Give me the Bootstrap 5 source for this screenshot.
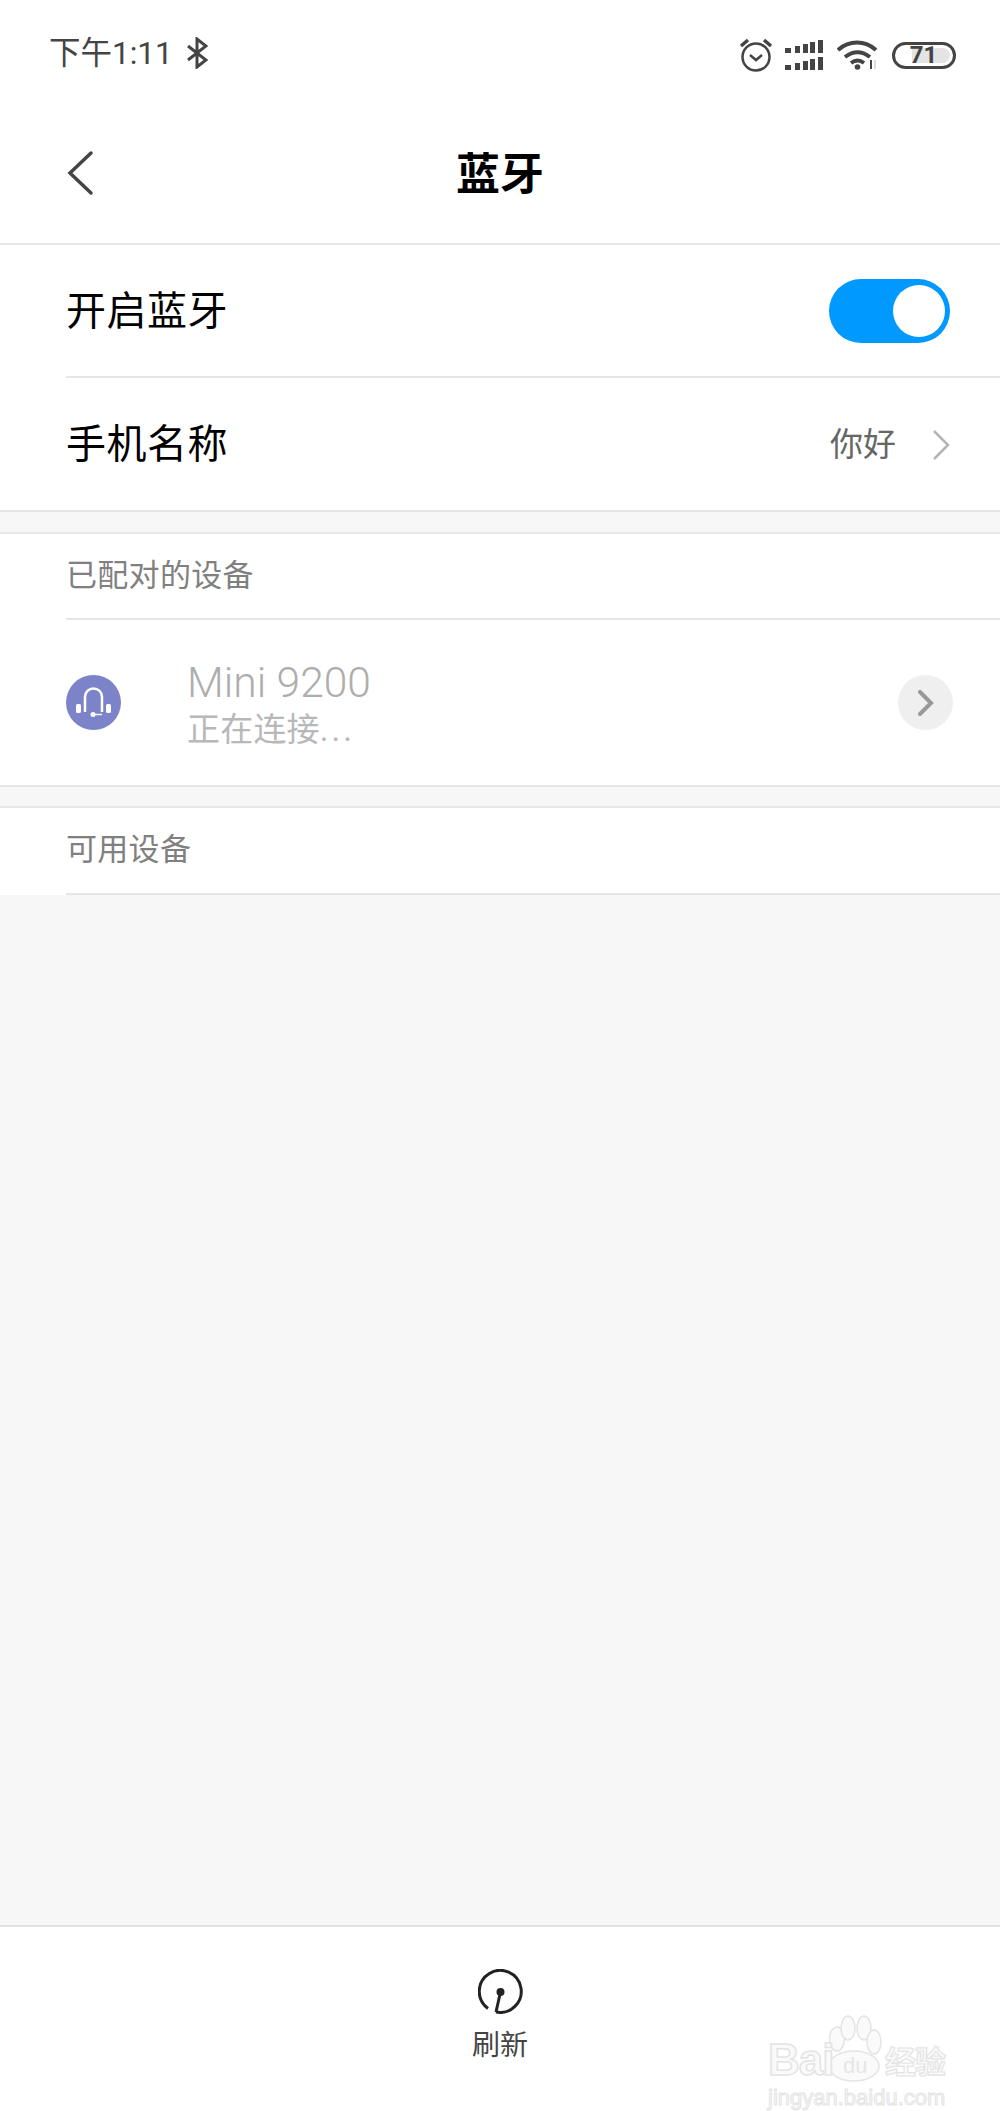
<!DOCTYPE html>
<html lang="zh">
<head>
<meta charset="utf-8">
<title>蓝牙</title>
<link rel="stylesheet" href="https://cdn.jsdelivr.net/npm/bootstrap@5.3.0/dist/css/bootstrap.min.css">
<style>
html,body{height:100%}
body{font-family:Roboto,"Noto Sans CJK SC",sans-serif;background:#f7f7f7;color:#000}
.phone{height:2111px;position:relative;overflow:hidden}
.stat-bar{height:80px;padding:34px 44px 0 49px;color:#444}
.stat-time{font-size:31.500px;line-height:40px}
.bt-ic{margin-left:-3px;margin-top:-2px}
.stat-icons{padding-top:4px}
.ic-alarm{margin-right:12px}
.ic-signal{margin-right:14px}
.ic-wifi{margin-right:13px}
.batt-num{font:700 24px/27px Roboto,sans-serif;color:#444}
.batt{width:64px;height:27px;border:3px solid #444;border-radius:14px;position:relative;display:flex;align-items:center;justify-content:center}
.batt-fill{position:absolute;left:17px;top:3px;bottom:3px;width:38px;background:#e4e4e4;border-radius:0 9px 9px 0}
.batt-num{position:relative;margin-left:-1px}
.top-head{height:165px;position:relative;border-bottom:2px solid #e6e6e6;background:#fff;padding-top:26px}
.head-title{font-size:44px;font-weight:700;line-height:60px}
.back-ic{position:absolute;left:66px;top:70px}
.ind-line{margin-left:66px;border-bottom:2px solid #e6e6e6}
.set-row{height:133px;padding-right:50px;padding-top:2px;font-size:40px;letter-spacing:.5px}
.set-row2{height:132px;margin-left:66px}
.group-a{border-bottom:2px solid #e6e6e6;background:#fff}
.sw{width:121px;height:64px;border-radius:32px;background:#0099ff;position:relative;margin-top:-2px}
.sw-knob{position:absolute;right:5px;top:6px;width:52px;height:52px;border-radius:50%;background:#fff}
.val{font-size:33px;color:#666;margin-right:36px;letter-spacing:0}
.gap-band{height:20px;background:#f7f7f7}
.gap-short{height:19px}
.sec-group{background:#fff;border-top:2px solid #e8e8e8}
.sec-head{height:86px;font-size:31px;letter-spacing:.3px;color:#808080}
.sec-last{height:87px}
.dev-row{height:165px;padding-right:47px;margin-left:66px}
.dev-ic{width:55px;height:55px;margin-right:69px;flex:none}
.dev-txt{padding-top:5px;margin-left:-3px}
.dev-name{font-size:42.500px;line-height:50px;color:#adadad;font-weight:300}
.dev-sub{font-size:33px;line-height:44px;color:#b8b8b8;margin-top:0;letter-spacing:.2px}
.dots{letter-spacing:3px}
.go-btn{width:55px;height:55px;border-radius:50%;background:#efefef;margin-left:auto}
.dev-wrap{border-bottom:2px solid #e6e6e6}
.foot-bar{height:186px;background:#fff;border-top:2px solid #e2e2e2;padding-top:42px;margin-top:auto}
.foot-lbl{font-size:28px;line-height:38px;color:#444;margin-top:13px}
.wm{position:absolute;left:768px;top:2012px;width:180px;height:97px;pointer-events:none}
.wm-brand{position:absolute;left:0;top:26px;font:700 44px/44px "Liberation Sans",sans-serif;color:#fafafa;-webkit-text-stroke:1.5px #e4e4e4;letter-spacing:-1px}
.wm-du{position:absolute;left:75px;top:41px;font:400 22px/26px "Liberation Sans",sans-serif;color:#e6e6e6}
.wm-cn{position:absolute;left:117px;top:28px;font:700 31px/40px "Noto Sans CJK SC",sans-serif;color:#fafafa;-webkit-text-stroke:1.2px #e4e4e4;letter-spacing:-1px;white-space:nowrap}
.wm-url{position:absolute;left:0;top:74px;font:400 22px/24px "Liberation Sans",sans-serif;color:#fafafa;-webkit-text-stroke:1px #e4e4e4;white-space:nowrap}
.wm-paw{position:absolute;left:56px;top:2px}
</style>
</head>
<body>
<div class="phone d-flex flex-column">
  <div class="stat-bar bg-white d-flex justify-content-between align-items-start">
    <div class="d-flex align-items-center gap-3">
      <span class="stat-time">下午1:11</span>
      <svg class="bt-ic" width="22" height="32" viewBox="0 0 22 32" fill="none" stroke="#444" stroke-width="3"><path d="M2 9l18 14-9 7V2l9 7L2 23"/></svg>
    </div>
    <div class="stat-icons d-flex align-items-center">
      <svg class="ic-alarm" width="34" height="34" viewBox="0 0 34 34" fill="none" stroke="#444"><circle cx="17" cy="19" r="13.500" stroke-width="2.500"/><path d="M11 17l6 5 6-5" stroke-width="2.500"/><path d="M2 8l7-6M32 8l-7-6" stroke-width="3.500"/></svg>
      <svg class="ic-signal" width="38" height="30" viewBox="0 0 38 30" fill="#444"><path d="M0 8h6v5H0zM10 6h5v7h-5zM18 4h5v9h-5zM25 2h5v11h-5zM33 0h5v13h-5zM0 25h6v5H0zM10 23h5v7h-5zM18 21h5v9h-5zM25 19h5v11h-5zM33 17h5v13h-5z"/></svg>
      <svg class="ic-wifi" width="42" height="30" viewBox="0 0 42 30" fill="none" stroke="#444" stroke-width="4"><path d="M1 10c11-10 27-10 38 0M8 17c8-6 17-6 25 0M14 23c4-3 9-3 13 0"/><circle cx="20.500" cy="27" r="2.800" fill="#444" stroke="none"/><path d="M34 20v9" stroke-width="2"/><path d="M38 20v9" stroke="#ddd" stroke-width="2"/></svg>
      <div class="batt"><span class="batt-fill"></span><span class="batt-num">71</span></div>
    </div>
  </div>

  <div class="top-head d-flex align-items-center justify-content-center">
    <svg class="back-ic" width="28" height="46" viewBox="0 0 28 46" fill="none" stroke="#444" stroke-width="3.500" stroke-linecap="round"><path d="M25 3L4 23l21 20"/></svg>
    <div class="head-title">蓝牙</div>
  </div>

  <div class="group-a">
    <div class="ind-line set-row d-flex align-items-center justify-content-between">
      <span>开启蓝牙</span>
      <div class="sw"><span class="sw-knob"></span></div>
    </div>
    <div class="set-row set-row2 d-flex align-items-center">
      <span class="me-auto">手机名称</span>
      <span class="val">你好</span>
      <svg width="18" height="32" viewBox="0 0 18 32" fill="none" stroke="#b4b4b4" stroke-width="2.500"><path d="M2 2l14 14L2 30"/></svg>
    </div>
  </div>

  <div class="gap-band"></div>

  <div class="sec-group dev-wrap">
    <div class="ind-line sec-head d-flex align-items-center"><span>已配对的设备</span></div>
    <div class="dev-row d-flex align-items-center">
      <svg class="dev-ic" viewBox="0 0 55 55"><circle cx="27.500" cy="27.500" r="27.500" fill="#7c83c8"/><path d="M19 37V22a8.500 8.500 0 0 1 17 0v15" fill="none" stroke="#fff" stroke-width="2.500"/><rect x="10" y="29" width="5" height="9" rx="1.500" fill="#fff"/><rect x="40" y="29" width="5" height="9" rx="1.500" fill="#fff"/><path d="M27 39.500h9" stroke="#fff" stroke-width="1.500"/><circle cx="27" cy="39.500" r="2.500" fill="#fff"/></svg>
      <div class="dev-txt">
        <div class="dev-name">Mini 9200</div>
        <div class="dev-sub">正在连接<span class="dots">...</span></div>
      </div>
      <div class="go-btn d-flex align-items-center justify-content-center">
        <svg width="16" height="26" viewBox="0 0 16 26" fill="none" stroke="#999" stroke-width="4" stroke-linecap="round"><path d="M2 2l11 11L2 24"/></svg>
      </div>
    </div>
  </div>

  <div class="gap-band gap-short"></div>

  <div class="sec-group">
    <div class="ind-line sec-head sec-last d-flex align-items-center"><span>可用设备</span></div>
  </div>

  <div class="foot-bar d-flex flex-column align-items-center">
    <svg width="45" height="45" viewBox="0 0 45 45" fill="none" stroke="#222" stroke-width="3"><path d="M18 43A21 21 0 1 0 10 39.500"/><path d="M22.500 23L18 43"/><circle cx="22.500" cy="23" r="4" fill="#222" stroke="none"/></svg>
    <div class="foot-lbl">刷新</div>
  </div>

  <div class="wm">
    <svg class="wm-paw" width="60" height="72" viewBox="0 0 60 72" fill="#fafafa" stroke="#e4e4e4" stroke-width="1.500"><ellipse cx="13" cy="25" rx="7.500" ry="12"/><ellipse cx="24" cy="14" rx="7" ry="12"/><ellipse cx="40" cy="14" rx="7" ry="12"/><ellipse cx="50" cy="28" rx="7" ry="12"/><ellipse cx="30" cy="52" rx="25" ry="15"/></svg>
    <span class="wm-brand">Bai</span>
    <span class="wm-du">du</span>
    <span class="wm-cn">经验</span>
    <span class="wm-url">jingyan.baidu.com</span>
  </div>
</div>
<script src="https://cdn.jsdelivr.net/npm/bootstrap@5.3.0/dist/js/bootstrap.bundle.min.js"></script>
</body>
</html>
